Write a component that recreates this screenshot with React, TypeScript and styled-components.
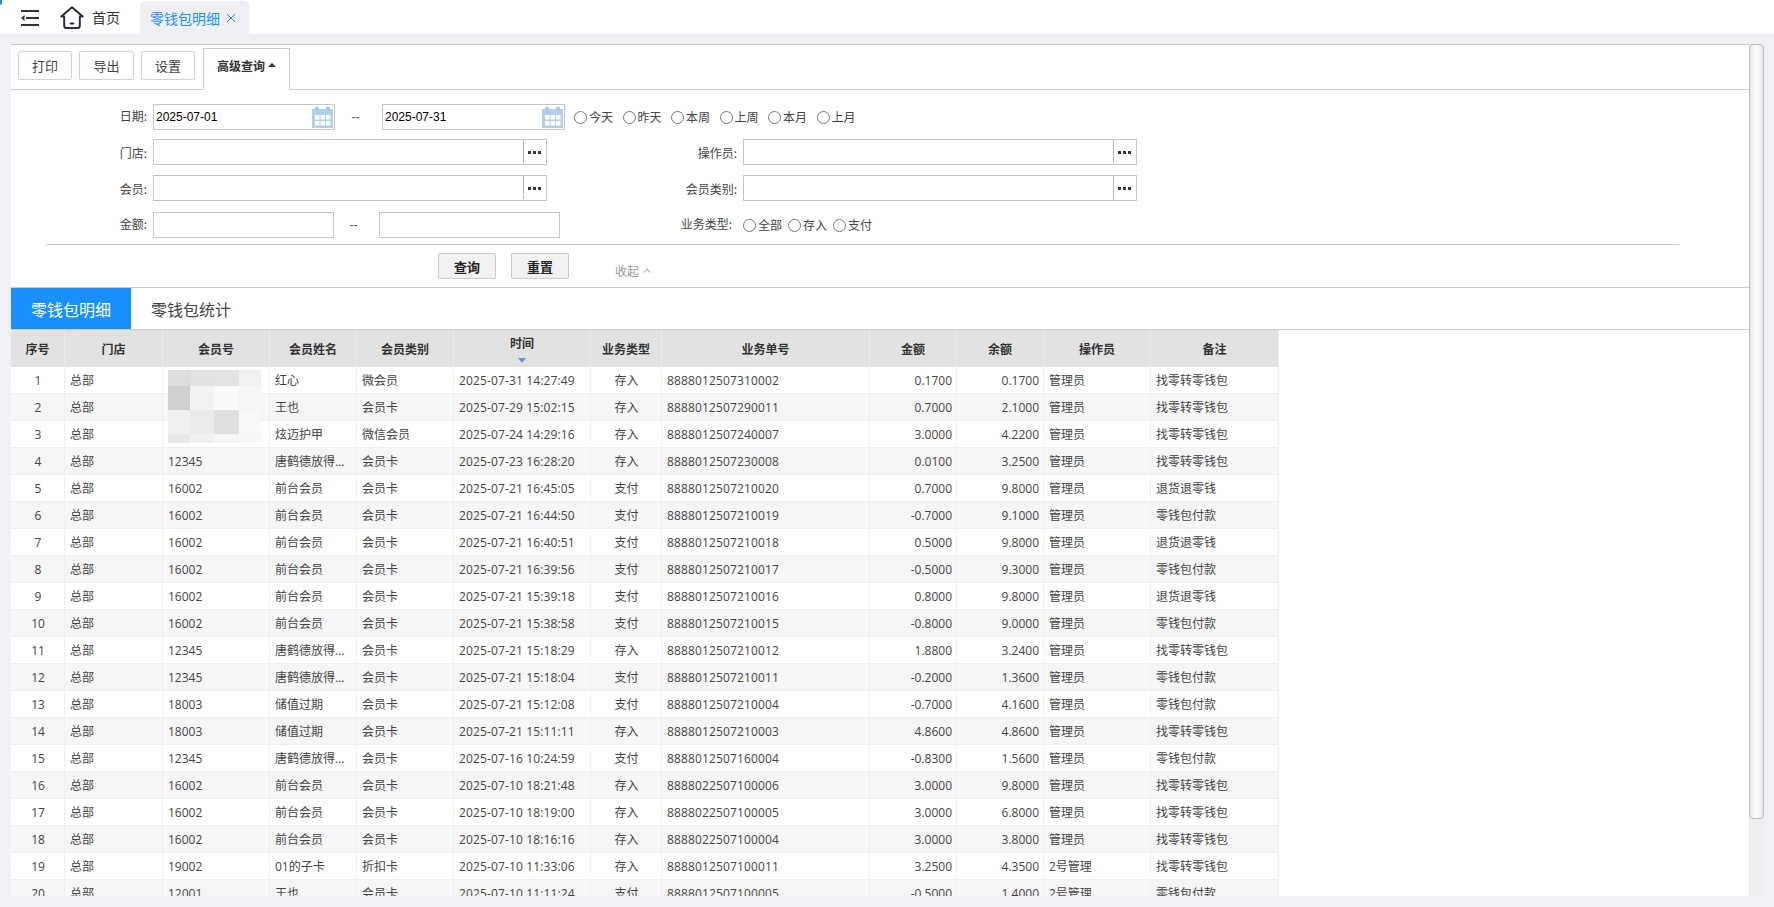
import React from "react";
import styled, { createGlobalStyle } from "styled-components";

const Global = createGlobalStyle`
  html, body { margin: 0; padding: 0; height: 100%; overflow: hidden; background: #eff1f5; }
  body { font-family: "Open Sans", "Noto Sans CJK SC", sans-serif; font-size: 12px; color: #444; }
  #root { height: 100%; }
  * { box-sizing: border-box; }
`;

const Page = styled.div`
  display: flex; flex-direction: column; width: 1774px; height: 907px; overflow: hidden; background: #eff1f5;
`;
const TopBar = styled.header`
  position: relative; flex: none; display: flex; align-items: flex-end; height: 34px; background: #fff; padding-left: 21px;
  &::before { content: ""; position: absolute; left: 0; top: 0; width: 2px; height: 5px; background: #1890ff; border-bottom-right-radius: 2px; }
`;
const MenuButton = styled.span`display: flex; align-self: center; width: 18px; height: 16px; margin-top: 2px;`;
const HomeLink = styled.span`
  display: flex; align-items: center; align-self: center; gap: 8px; margin-left: 21px; font-size: 14px; color: #333; font-family: "Noto Sans CJK SC", sans-serif;
`;
const PageTab = styled.span`
  display: flex; align-items: center; gap: 6px; height: 33px; width: 109px; margin-left: 20px; padding-left: 10px;
  background: #eef0f5; border-radius: 5px 5px 0 0; color: #1890ff; font-size: 14px; font-family: "Noto Sans CJK SC", sans-serif;
`;
const Main = styled.main`flex: 1; display: flex; min-height: 0; padding: 10px 10px 11px 11px;`;
const Panel = styled.section`
  flex: 1; display: flex; flex-direction: column; min-width: 0; background: #fff; border-top: 1px solid #ccc; overflow: hidden;
`;
const ScrollTrack = styled.div`flex: none; width: 15px; background: #eeeeee;`;
const ScrollThumb = styled.div`
  height: 775px; border: 1px solid #bdbdbd; border-radius: 4px; background: linear-gradient(90deg, #e6e6e6, #fbfbfb 40%, #f6f6f6 75%, #e4e4e4);
`;
const Toolbar = styled.div`
  flex: none; display: flex; align-items: flex-start; height: 45px; padding: 6px 0 0 7px; gap: 7px; border-bottom: 1px solid #ccc;
`;
const ToolButton = styled.button<{ $w: number }>`
  width: ${(p) => p.$w}px; height: 29px; padding: 0; background: #fff; border: 1px solid #d2d2d2; border-radius: 2px;
  color: #444; font: 13px "Noto Sans CJK SC", sans-serif;
`;
const QueryTab = styled.div`
  display: flex; align-items: flex-start; justify-content: center; gap: 3px; width: 87px; height: 42px; margin: -3px 0 0 1px; padding-top: 8px;
  border: 1px solid #ccc; border-bottom: 1px solid #fff; background: #fff; color: #333; font: 600 12px "Noto Sans CJK SC", sans-serif; position: relative;
`;
const Caret = styled.span`
  display: block; width: 0; height: 0; margin-top: 6px; border-left: 4px solid transparent; border-right: 4px solid transparent; border-bottom: 4px solid #333;
`;
const Form = styled.div`flex: none; display: flex; flex-direction: column; padding-top: 14px;`;
const FormRow = styled.div<{ $top?: number }>`
  display: flex; align-items: center; height: 26px; margin-top: ${(p) => p.$top ?? 0}px;
`;
const Label = styled.label<{ $w: number; $up?: number }>`
  flex: none; width: ${(p) => p.$w}px; margin-right: 6px; padding-bottom: ${(p) => p.$up ?? 0}px; text-align: right; color: #444; font-family: "Noto Sans CJK SC", sans-serif; white-space: nowrap;
`;
const FieldBox = styled.div<{ $w: number }>`
  flex: none; display: flex; align-items: center; width: ${(p) => p.$w}px; height: 26px; border: 1px solid #c6c6c6; background: #fff;
`;
const TextField = styled.input`
  flex: 1; min-width: 0; height: 100%; padding: 0 0 0 2px; border: 0; outline: 0; background: transparent; color: #000; font: 12px "Liberation Sans", sans-serif;
`;
const CalendarSlot = styled.span`flex: none; display: flex; width: 21px; margin-right: 1px;`;
const PickerButton = styled.span`
  flex: none; display: flex; align-items: center; justify-content: center; position: relative; width: 23px; height: 24px;
  &::before { content: ""; position: absolute; left: 0; top: 0; height: 23px; border-left: 1px solid #b8b8b8; }
`;
const RangeDash = styled.span<{ $w: number; $shift: number }>`
  flex: none; width: ${(p) => p.$w}px; padding-right: ${(p) => p.$shift}px; text-align: center; color: #555; font-family: "Liberation Sans", sans-serif;
`;
const RadioGroup = styled.div<{ $left: number; $gap: number }>`
  flex: none; display: flex; align-items: center; gap: ${(p) => p.$gap}px; margin-left: ${(p) => p.$left}px;
`;
const RadioItem = styled.label`
  display: flex; align-items: center; gap: 2px; color: #444; font-family: "Noto Sans CJK SC", sans-serif; line-height: 16px;
`;
const RadioDot = styled.input`margin: 1px 0 0; width: 13px; height: 13px; flex: none;`;
const FormRule = styled.hr`
  flex: none; width: 1633px; height: 1px; margin: 6px 0 0 35px; border: 0; background: #ccc;
`;
const ActionRow = styled.div`
  flex: none; display: flex; align-items: flex-start; height: 34px; padding: 8px 0 0 427px; border-bottom: 1px solid #ccc; box-sizing: content-box;
`;
const ActionButton = styled.button`
  width: 58px; height: 26px; margin-right: 15px; padding: 0; background: #f1f1f1; border: 1px solid #ccc; border-radius: 2px; color: #222;
  font: 700 13px "Noto Sans CJK SC", sans-serif;
`;
const Collapse = styled.span`
  display: flex; align-items: center; gap: 4px; margin: 9px 0 0 31px; color: #999; font-family: "Noto Sans CJK SC", sans-serif;
`;
const TabBar = styled.nav`flex: none; display: flex; height: 42px; border-bottom: 1px solid #ccc; padding-bottom: 0;`;
const DataTab = styled.span<{ $on?: boolean }>`
  display: flex; align-items: center; justify-content: center; width: 120px; height: 41px; font: 16px "Noto Sans CJK SC", sans-serif;
  background: ${(p) => (p.$on ? "#1890ff" : "#fff")}; color: ${(p) => (p.$on ? "#fff" : "#444")};
`;
const TableWrap = styled.div`position: relative; flex: 1; min-height: 0; overflow: hidden;`;
const Table = styled.table`border-collapse: separate; border-spacing: 0; table-layout: fixed; width: 1268px;`;
const HeadCell = styled.th`
  height: 37px; padding: 0 2px; background: #e2e2e2; border-right: 1px solid #ebebeb; color: #333; font: 700 12px "Noto Sans CJK SC", sans-serif; text-align: center; vertical-align: middle;
`;
const SortHead = styled.div`display: flex; flex-direction: column; align-items: center; gap: 7px; margin-top: 0;`;
const SortArrow = styled.span`
  display: block; width: 0; height: 0; border-left: 4.5px solid transparent; border-right: 4.5px solid transparent; border-top: 5px solid #6a94cc;
`;
const Row = styled.tr<{ $alt: boolean }>`background: ${(p) => (p.$alt ? "#f6f6f6" : "#fff")};`;
const Cell = styled.td<{ $align?: string; $num?: boolean }>`
  height: 27px; padding: ${(p) => (p.$align === "right" ? "0 4px 0 2px" : "0 4px 0 5px")}; border-right: 1px solid #efefef; border-bottom: 1px solid #efefef;
  text-align: ${(p) => p.$align ?? "left"}; color: #444; white-space: nowrap; overflow: hidden; text-overflow: ellipsis;
  letter-spacing: ${(p) => (p.$num ? "0.14px" : "0")};
`;
const Mosaic = styled.div`
  position: absolute; left: 157px; top: 40px; display: grid; grid-template-columns: 22px 24px 25px 22px; grid-template-rows: 16px 24px 24px 9px;
`;
const Tile = styled.span<{ $c: string }>`background: ${(p) => p.$c};`;

const MenuIcon = () => (
  <svg width="18" height="16" viewBox="0 0 18 16" fill="#333">
    <rect x="0" y="0" width="18" height="2" />
    <rect x="5" y="7" width="13" height="2" />
    <rect x="0" y="14" width="18" height="2" />
    <path d="M3.5 5v6L0 8z" />
  </svg>
);
const HomeIcon = () => (
  <svg width="24" height="23" viewBox="0 0 24 23" fill="none" stroke="#2b303b" strokeWidth="2" strokeLinejoin="round" strokeLinecap="round">
    <path d="M12 1.2 1.3 10.6 H4.2 V19.4 Q4.2 22 6.8 22 H17.2 Q19.8 22 19.8 19.4 V10.6 H22.7 Z" />
    <path d="M10.6 17.6h2.8" />
  </svg>
);
const CloseIcon = () => (
  <svg width="10" height="10" viewBox="0 0 10 10" stroke="#1890ff" strokeWidth="1">
    <path d="M1 1l8 8M9 1l-8 8" />
  </svg>
);
const CalendarIcon = () => (
  <svg width="21" height="21" viewBox="0 0 21 21">
    <rect x="0" y="2" width="21" height="19" fill="#b2d0ea" />
    <rect x="3" y="0" width="4" height="4" fill="#a6c8e6" />
    <rect x="14" y="0" width="4" height="4" fill="#a6c8e6" />
    {[3, 8.5, 14].map((x) =>
      [8, 14].map((y) => <rect key={`${x}-${y}`} x={x} y={y} width="4.5" height="4.5" fill="#fff" />)
    )}
  </svg>
);
const DotsIcon = () => (
  <svg width="13" height="3" viewBox="0 0 13 3" fill="#3a3344">
    <rect x="0" width="3" height="3" />
    <rect x="5" width="3" height="3" />
    <rect x="10" width="3" height="3" />
  </svg>
);
const ChevronUp = () => (
  <svg width="8" height="5" viewBox="0 0 8 5" fill="none" stroke="#999" strokeWidth="1">
    <path d="M.5 4.5 4 1l3.5 3.5" />
  </svg>
);

const Picker = ({ w }: { w: number }) => (
  <FieldBox $w={w}>
    <TextField readOnly />
    <PickerButton><DotsIcon /></PickerButton>
  </FieldBox>
);
const DateField = ({ w, v }: { w: number; v: string }) => (
  <FieldBox $w={w}>
    <TextField readOnly value={v} />
    <CalendarSlot><CalendarIcon /></CalendarSlot>
  </FieldBox>
);
const Radios = ({ items, left, gap, name }: { items: string[]; left: number; gap: number; name: string }) => (
  <RadioGroup $left={left} $gap={gap}>
    {items.map((t) => (
      <RadioItem key={t}><RadioDot type="radio" name={name} />{t}</RadioItem>
    ))}
  </RadioGroup>
);

const columns: [string, number][] = [
  ["序号", 54], ["门店", 98], ["会员号", 107], ["会员姓名", 87], ["会员类别", 97], ["时间", 137],
  ["业务类型", 71], ["业务单号", 208], ["金额", 87], ["余额", 87], ["操作员", 107], ["备注", 128],
];
const longName = "唐鹤德放得开心果";
const Z = "找零转零钱包", P = "零钱包付款", T = "退货退零钱", M = "管理员";
const rows: string[][] = [
  ["", "红心", "微会员", "2025-07-31 14:27:49", "存入", "8888012507310002", "0.1700", "0.1700", M, Z],
  ["", "王也", "会员卡", "2025-07-29 15:02:15", "存入", "8888012507290011", "0.7000", "2.1000", M, Z],
  ["", "炫迈护甲", "微信会员", "2025-07-24 14:29:16", "存入", "8888012507240007", "3.0000", "4.2200", M, Z],
  ["12345", longName, "会员卡", "2025-07-23 16:28:20", "存入", "8888012507230008", "0.0100", "3.2500", M, Z],
  ["16002", "前台会员", "会员卡", "2025-07-21 16:45:05", "支付", "8888012507210020", "0.7000", "9.8000", M, T],
  ["16002", "前台会员", "会员卡", "2025-07-21 16:44:50", "支付", "8888012507210019", "-0.7000", "9.1000", M, P],
  ["16002", "前台会员", "会员卡", "2025-07-21 16:40:51", "支付", "8888012507210018", "0.5000", "9.8000", M, T],
  ["16002", "前台会员", "会员卡", "2025-07-21 16:39:56", "支付", "8888012507210017", "-0.5000", "9.3000", M, P],
  ["16002", "前台会员", "会员卡", "2025-07-21 15:39:18", "支付", "8888012507210016", "0.8000", "9.8000", M, T],
  ["16002", "前台会员", "会员卡", "2025-07-21 15:38:58", "支付", "8888012507210015", "-0.8000", "9.0000", M, P],
  ["12345", longName, "会员卡", "2025-07-21 15:18:29", "存入", "8888012507210012", "1.8800", "3.2400", M, Z],
  ["12345", longName, "会员卡", "2025-07-21 15:18:04", "支付", "8888012507210011", "-0.2000", "1.3600", M, P],
  ["18003", "储值过期", "会员卡", "2025-07-21 15:12:08", "支付", "8888012507210004", "-0.7000", "4.1600", M, P],
  ["18003", "储值过期", "会员卡", "2025-07-21 15:11:11", "存入", "8888012507210003", "4.8600", "4.8600", M, Z],
  ["12345", longName, "会员卡", "2025-07-16 10:24:59", "支付", "8888012507160004", "-0.8300", "1.5600", M, P],
  ["16002", "前台会员", "会员卡", "2025-07-10 18:21:48", "存入", "8888022507100006", "3.0000", "9.8000", M, Z],
  ["16002", "前台会员", "会员卡", "2025-07-10 18:19:00", "存入", "8888022507100005", "3.0000", "6.8000", M, Z],
  ["16002", "前台会员", "会员卡", "2025-07-10 18:16:16", "存入", "8888022507100004", "3.0000", "3.8000", M, Z],
  ["19002", "01的子卡", "折扣卡", "2025-07-10 11:33:06", "存入", "8888012507100011", "3.2500", "4.3500", "2号管理", Z],
  ["12001", "王也", "会员卡", "2025-07-10 11:11:24", "支付", "8888012507100005", "-0.5000", "1.4000", "2号管理", P],
];
const mosaic = [
  "#dcdddc", "#e2e2e0", "#e4e3e1", "#f1f1f1",
  "#cfcfcf", "#f2f2f2", "#fafafa", "#f6f6f6",
  "#efefef", "#ebebeb", "#e0e0de", "#f9f9f9",
  "#e8e8e8", "#f0f0f0", "#f6f6f6", "#f8f8f8",
];

export default function App() {
  return (
    <Page>
      <Global />
      <TopBar>
        <MenuButton><MenuIcon /></MenuButton>
        <HomeLink><HomeIcon />首页</HomeLink>
        <PageTab>零钱包明细<CloseIcon /></PageTab>
      </TopBar>
      <Main>
        <Panel>
          <Toolbar>
            <ToolButton $w={54}>打印</ToolButton>
            <ToolButton $w={55}>导出</ToolButton>
            <ToolButton $w={54}>设置</ToolButton>
            <QueryTab>高级查询<Caret /></QueryTab>
          </Toolbar>
          <Form>
            <FormRow>
              <Label $w={136} $up={4}>日期:</Label>
              <DateField w={182} v="2025-07-01" />
              <RangeDash $w={47} $shift={6}>--</RangeDash>
              <DateField w={183} v="2025-07-31" />
              <Radios name="d" left={9} gap={9.5} items={["今天", "昨天", "本周", "上周", "本月", "上月"]} />
            </FormRow>
            <FormRow $top={9}>
              <Label $w={136}>门店:</Label>
              <Picker w={394} />
              <Label $w={190}>操作员:</Label>
              <Picker w={394} />
            </FormRow>
            <FormRow $top={10}>
              <Label $w={136}>会员:</Label>
              <Picker w={394} />
              <Label $w={190}>会员类别:</Label>
              <Picker w={394} />
            </FormRow>
            <FormRow $top={11}>
              <Label $w={136} $up={3}>金额:</Label>
              <FieldBox $w={181}><TextField readOnly /></FieldBox>
              <RangeDash $w={45} $shift={6}>--</RangeDash>
              <FieldBox $w={181}><TextField readOnly /></FieldBox>
              <Label $w={172} $up={3}>业务类型:</Label>
              <Radios name="t" left={5} gap={6} items={["全部", "存入", "支付"]} />
            </FormRow>
          </Form>
          <FormRule />
          <ActionRow>
            <ActionButton>查询</ActionButton>
            <ActionButton>重置</ActionButton>
            <Collapse>收起<ChevronUp /></Collapse>
          </ActionRow>
          <TabBar>
            <DataTab $on>零钱包明细</DataTab>
            <DataTab>零钱包统计</DataTab>
          </TabBar>
          <TableWrap>
            <Table>
              <colgroup>
                {columns.map(([n, w]) => <col key={n} width={w} />)}
              </colgroup>
              <thead>
                <tr>
                  {columns.map(([n]) => (
                    <HeadCell key={n}>
                      {n === "时间" ? <SortHead>{n}<SortArrow /></SortHead> : n}
                    </HeadCell>
                  ))}
                </tr>
              </thead>
              <tbody>
                {rows.map((r, i) => (
                  <Row key={i} $alt={i % 2 === 1}>
                    <Cell $align="center">{i + 1}</Cell>
                    <Cell>总部</Cell>
                    <Cell>{r[0]}</Cell>
                    <Cell>{r[1]}</Cell>
                    <Cell>{r[2]}</Cell>
                    <Cell $num>{r[3]}</Cell>
                    <Cell $align="center">{r[4]}</Cell>
                    <Cell $num>{r[5]}</Cell>
                    <Cell $align="right">{r[6]}</Cell>
                    <Cell $align="right">{r[7]}</Cell>
                    <Cell>{r[8]}</Cell>
                    <Cell>{r[9]}</Cell>
                  </Row>
                ))}
              </tbody>
            </Table>
            <Mosaic>
              {mosaic.map((c, i) => <Tile key={i} $c={c} />)}
            </Mosaic>
          </TableWrap>
        </Panel>
        <ScrollTrack><ScrollThumb /></ScrollTrack>
      </Main>
    </Page>
  );
}
